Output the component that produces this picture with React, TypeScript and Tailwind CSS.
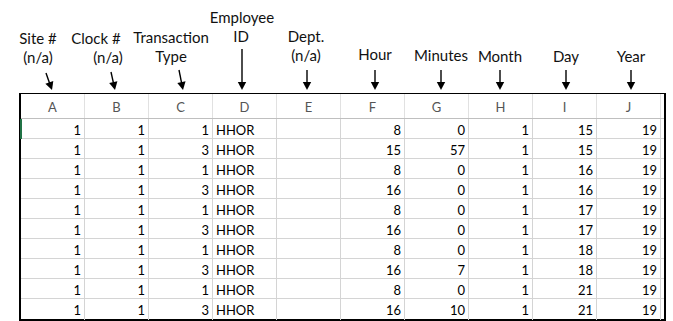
import React from "react";

type Lbl = { text: string; cx: number; top: number };

const labels: Lbl[] = [
  { text: "Site #", cx: 38, top: 29 },
  { text: "(n/a)", cx: 38, top: 48 },
  { text: "Clock #", cx: 96, top: 29 },
  { text: "(n/a)", cx: 108, top: 48 },
  { text: "Transaction", cx: 171, top: 28 },
  { text: "Type", cx: 171, top: 47 },
  { text: "Employee", cx: 242, top: 8 },
  { text: "ID", cx: 241, top: 27 },
  { text: "Dept.", cx: 306, top: 27 },
  { text: "(n/a)", cx: 306, top: 46 },
  { text: "Hour", cx: 375, top: 45 },
  { text: "Minutes", cx: 441, top: 46 },
  { text: "Month", cx: 500, top: 47 },
  { text: "Day", cx: 566, top: 47 },
  { text: "Year", cx: 631, top: 47 },
];

const arrows: [number, number, number, number][] = [
  [46, 73, 52, 90],
  [111, 72, 115, 90],
  [179, 70, 183, 90],
  [242, 49, 242, 90],
  [307, 70, 307, 90],
  [375, 70, 375, 90],
  [441, 70, 441, 90],
  [500, 70, 500, 90],
  [566, 70, 566, 90],
  [631, 70, 631, 90],
];

function Arrow({ a }: { a: [number, number, number, number] }) {
  const [x1, y1, x2, y2] = a;
  const dx = x2 - x1;
  const dy = y2 - y1;
  const len = Math.sqrt(dx * dx + dy * dy);
  const ux = dx / len;
  const uy = dy / len;
  const hl = 8;
  const hw = 4.2;
  const bx = x2 - ux * hl;
  const by = y2 - uy * hl;
  const px = -uy;
  const py = ux;
  const pts = `${x2},${y2} ${bx + px * hw},${by + py * hw} ${bx - px * hw},${by - py * hw}`;
  return (
    <g>
      <line x1={x1} y1={y1} x2={bx + ux} y2={by + uy} stroke="#000" strokeWidth={1.4} />
      <polygon points={pts} fill="#000" />
    </g>
  );
}

const cols = ["A", "B", "C", "D", "E", "F", "G", "H", "I", "J"];

const rows: (number | string | null)[][] = [
  [1, 1, 1, "HHOR", null, 8, 0, 1, 15, 19],
  [1, 1, 3, "HHOR", null, 15, 57, 1, 15, 19],
  [1, 1, 1, "HHOR", null, 8, 0, 1, 16, 19],
  [1, 1, 3, "HHOR", null, 16, 0, 1, 16, 19],
  [1, 1, 1, "HHOR", null, 8, 0, 1, 17, 19],
  [1, 1, 3, "HHOR", null, 16, 0, 1, 17, 19],
  [1, 1, 1, "HHOR", null, 8, 0, 1, 18, 19],
  [1, 1, 3, "HHOR", null, 16, 7, 1, 18, 19],
  [1, 1, 1, "HHOR", null, 8, 0, 1, 21, 19],
  [1, 1, 3, "HHOR", null, 16, 10, 1, 21, 19],
];

export default function App() {
  return (
    <div className="w-[673px] h-[321px] bg-white overflow-hidden font-['Lato',sans-serif] text-[15px]">
      <div className="relative h-[93px] text-[#111]">
        {labels.map((l, i) => (
          <div
            key={i}
            className="absolute leading-[19px] whitespace-nowrap -translate-x-1/2"
            style={{ left: l.cx, top: l.top }}
          >
            {l.text}
          </div>
        ))}
        <svg className="absolute left-0 top-0" width={673} height={93}>
          {arrows.map((a, i) => (
            <Arrow key={i} a={a} />
          ))}
        </svg>
      </div>
      <div className="ml-[19px] w-[647px] border-black border-t border-l-2 border-r-2 border-b-2 text-[13px]">
        <div className="grid grid-cols-[repeat(10,64px)] h-[25px] border-b border-[#bfbfbf]">
          {cols.map((c) => (
            <div
              key={c}
              className="text-center pt-[4px] text-[#555] leading-[19px] border-r border-[#e1e1e1]"
            >
              {c}
            </div>
          ))}
        </div>
        {rows.map((r, ri) => (
          <div
            key={ri}
            className={`grid grid-cols-[repeat(10,64px)] h-[20px] ${ri < rows.length - 1 ? "border-b border-[#d4d4d4]" : ""}`}
          >
            {r.map((v, ci) => (
              <div
                key={ci}
                className={`relative border-r border-[#d4d4d4] pt-[1px] leading-[20px] text-black whitespace-nowrap ${
                  typeof v === "string" ? "text-left pl-[3px]" : "text-right pr-[3px]"
                }`}
              >
                {ri === 0 && ci === 0 && (
                  <span className="absolute left-[-1px] top-0 h-[20px] w-[2px] bg-[#217346]" />
                )}
                {v === null ? "" : v}
              </div>
            ))}
          </div>
        ))}
      </div>
    </div>
  );
}
